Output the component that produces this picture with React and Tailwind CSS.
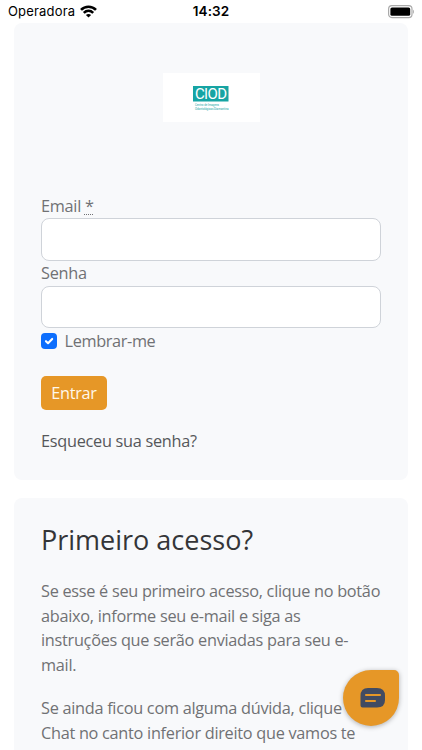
import React from "react";

function StatusBar() {
  return (
    <header className="grid h-[23px] shrink-0 grid-cols-3 items-center px-2 font-['Inter','Liberation_Sans',sans-serif] text-black">
      <div className="flex items-center gap-[5px] text-[13px] leading-[23px] tracking-[0.18px]">
        <span>Operadora</span>
        <svg width="17" height="13" viewBox="0 0 17 13" fill="none" stroke="#000" strokeWidth="2.6">
          <path d="M1 4.9C5 .7 12 .7 16 4.9" />
          <path d="M3.8 7.9c2.8-2.7 6.6-2.7 9.4 0" />
          <path d="M8.5 12.6 5.9 10c1.4-1.3 3.8-1.3 5.2 0z" fill="#000" stroke="none" />
        </svg>
      </div>
      <span className="text-center text-[13.5px] leading-[23px] font-semibold tracking-[0.1px]">14:32</span>
      <svg className="justify-self-end" width="27" height="14" viewBox="0 0 27 14">
        <rect x="1.6" y=".6" width="23.4" height="12" rx="3.3" fill="#fff" stroke="#aaa" strokeWidth="1.2" />
        <rect x="3.4" y="2.4" width="19.8" height="8.4" rx="1.6" fill="#000" />
        <path d="M26 4.7v4c1.2-.5 1.2-3.5 0-4" fill="#aaa" />
      </svg>
    </header>
  );
}

function Logo() {
  return (
    <div className="mx-auto flex h-[49px] w-[97px] flex-col items-center bg-white pt-[13px] tracking-normal">
      <svg className="overflow-visible" width="44" height="30" viewBox="0 0 44 30">
        <rect x="4" width="35.5" height="15.5" fill="#16a4a3" />
        <text x="6" y="13.1" fontFamily="Roboto, sans-serif" fontSize="15" fill="#fff" textLength="32">CIOD</text>
        <text x="6" y="20" fontFamily="Roboto, sans-serif" fontSize="3.4" fill="#16a4a3" textLength="24" lengthAdjust="spacingAndGlyphs">Centro de Imagens</text>
        <text x="6" y="24" fontFamily="Roboto, sans-serif" fontSize="3.4" fill="#16a4a3" textLength="33.5" lengthAdjust="spacingAndGlyphs">Odontológicas Diamantina</text>
      </svg>
    </div>
  );
}

export default function App() {
  return (
    <div className="relative flex h-[750px] w-[422px] flex-col overflow-hidden bg-white font-['Open_Sans','Noto_Sans',sans-serif] text-[16.3px] leading-[24.7px] tracking-[-0.28px] text-[#707174]">
      <StatusBar />
      <main className="flex flex-col gap-[18px] pr-[14px] pl-[14px]">
        <section className="flex h-[457px] flex-col rounded-lg bg-[#f8f9fb] px-[27px] pt-[50px]">
          <Logo />
          <form className="mt-[72px] flex flex-col">
            <label htmlFor="email" className="h-[24.4px]">
              Email <abbr title="obrigatório" className="underline decoration-dotted decoration-1 underline-offset-2">*</abbr>
            </label>
            <input id="email" className="h-[42.6px] rounded-lg border border-[#cfd3d9] bg-white px-3 outline-none" />
            <label htmlFor="password" className="h-[25px]">Senha</label>
            <input id="password" type="password" className="h-[42px] rounded-lg border border-[#cfd3d9] bg-white px-3 outline-none" />
            <div className="flex h-[26px] items-center gap-[7.5px]">
              <span role="checkbox" aria-checked="true" aria-label="Lembrar-me" className="flex size-4 items-center justify-center rounded-[4px] bg-[#0d6efd]">
                <svg width="16" height="16" viewBox="0 0 20 20" fill="none" stroke="#fff" strokeWidth="2.6" strokeLinecap="round" strokeLinejoin="round">
                  <path d="m6.2 10.2 2.6 2.6 5.2-5.4" />
                </svg>
              </span>
              <span className="pt-px tracking-[-0.36px]">Lembrar-me</span>
            </div>
            <button type="button" className="mt-[21.6px] h-[34.6px] w-[66px] rounded-[5px] bg-[#e69727] text-[#fff8ec]">Entrar</button>
          </form>
          <a className="mt-[18.4px] text-[#55575a]">Esqueceu sua senha?</a>
        </section>
        <section className="h-[300px] shrink-0 rounded-lg bg-[#f8f9fb] px-[27px] pt-[24px]">
          <h2 className="text-[27px] leading-[36px] tracking-normal text-[#343538]">Primeiro acesso?</h2>
          <p className="mt-[21px] whitespace-nowrap">
            Se esse é seu primeiro acesso, clique no botão<br />
            abaixo, informe seu e-mail e siga as<br />
            instruções que serão enviadas para seu e-<br />
            mail.
          </p>
          <p className="mt-[18px] whitespace-nowrap">
            Se ainda ficou com alguma dúvida, clique<br />
            Chat no canto inferior direito que vamos te
          </p>
        </section>
      </main>
      <button type="button" aria-label="Chat" className="absolute top-[670px] left-[343px] flex size-14 items-center justify-center rounded-[28px] rounded-tr-[5px] bg-[#e69727] pb-px pl-[3px] shadow-[0_1px_5px_rgba(0,0,0,0.3)]">
        <svg width="25" height="20" viewBox="0 0 25 20">
          <path d="M8 0h9q8 0 8 8v4q0 7.5-8 7.5H2.5Q.5 19.5.5 17.5V8Q.5 0 8 0Z" fill="#414b62" />
          <path d="M6 7h14M6 13h9" stroke="#e69727" strokeWidth="2.1" strokeLinecap="round" />
        </svg>
      </button>
    </div>
  );
}
